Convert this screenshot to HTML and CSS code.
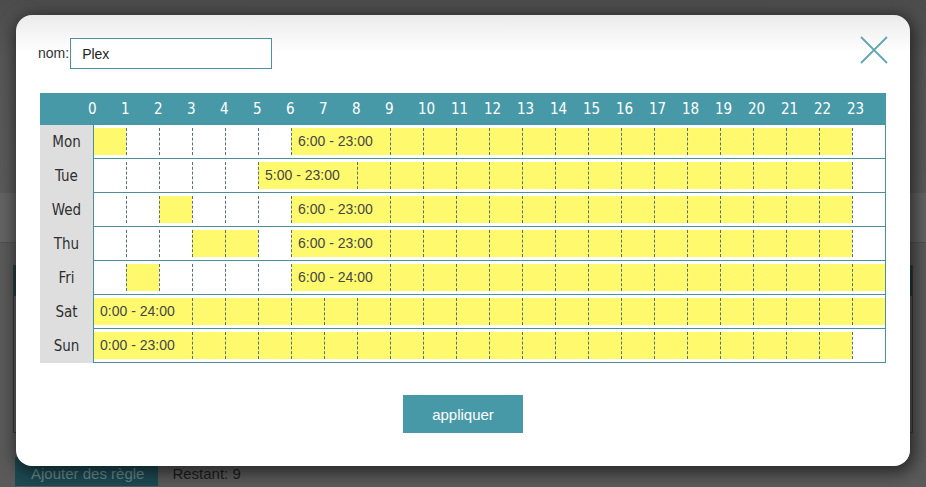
FILE: index.html
```html
<!DOCTYPE html>
<html lang="fr">
<head>
<meta charset="utf-8">
<title>Plex</title>
<link rel="stylesheet" href="styles.css">
</head>
<body>
<div class="page">
  <div class="pg-top"></div>
  <div class="pg-tabs"></div>
  <div class="pg-box"><div class="pg-box-head"></div></div>
  <div class="pg-foot">
    <div class="pg-btn">Ajouter des règle</div>
    <div class="pg-rest">Restant: 9</div>
  </div>
</div>

<div class="modal">
  <div class="top">
    <label class="nom" for="nom">nom:</label>
    <input class="field" id="nom" type="text" value="Plex">
    <div class="close">
      <svg width="28" height="28" viewBox="0 0 28 28"><path d="M1 1 L27 27 M27 1 L1 27" stroke="#5fa7b2" stroke-width="1.8" fill="none"/></svg>
    </div>
  </div>

  <div class="sched">
    <div class="hd">
      <div></div>
      <span>0</span><span>1</span><span>2</span><span>3</span><span>4</span><span>5</span><span>6</span><span>7</span><span>8</span><span>9</span><span>10</span><span>11</span><span>12</span><span>13</span><span>14</span><span>15</span><span>16</span><span>17</span><span>18</span><span>19</span><span>20</span><span>21</span><span>22</span><span>23</span>
    </div>

    <div class="row">
      <div class="day">Mon</div>
      <div class="track">
        <div class="c on"></div>
        <div class="c"></div><div class="c"></div><div class="c"></div><div class="c"></div><div class="c"></div>
        <div class="c on lbl">6:00 - 23:00</div>
        <div class="c on"></div><div class="c on"></div><div class="c on"></div><div class="c on"></div><div class="c on"></div><div class="c on"></div><div class="c on"></div><div class="c on"></div><div class="c on"></div><div class="c on"></div><div class="c on"></div><div class="c on"></div><div class="c on"></div><div class="c on"></div>
        <div class="c"></div>
      </div>
    </div>

    <div class="row">
      <div class="day">Tue</div>
      <div class="track">
        <div class="c"></div><div class="c"></div><div class="c"></div><div class="c"></div><div class="c"></div>
        <div class="c on lbl">5:00 - 23:00</div>
        <div class="c on"></div><div class="c on"></div><div class="c on"></div><div class="c on"></div><div class="c on"></div><div class="c on"></div><div class="c on"></div><div class="c on"></div><div class="c on"></div><div class="c on"></div><div class="c on"></div><div class="c on"></div><div class="c on"></div><div class="c on"></div><div class="c on"></div>
        <div class="c"></div>
      </div>
    </div>

    <div class="row">
      <div class="day">Wed</div>
      <div class="track">
        <div class="c"></div><div class="c"></div>
        <div class="c on"></div>
        <div class="c"></div><div class="c"></div><div class="c"></div>
        <div class="c on lbl">6:00 - 23:00</div>
        <div class="c on"></div><div class="c on"></div><div class="c on"></div><div class="c on"></div><div class="c on"></div><div class="c on"></div><div class="c on"></div><div class="c on"></div><div class="c on"></div><div class="c on"></div><div class="c on"></div><div class="c on"></div><div class="c on"></div><div class="c on"></div>
        <div class="c"></div>
      </div>
    </div>

    <div class="row">
      <div class="day">Thu</div>
      <div class="track">
        <div class="c"></div><div class="c"></div><div class="c"></div>
        <div class="c on"></div><div class="c on"></div>
        <div class="c"></div>
        <div class="c on lbl">6:00 - 23:00</div>
        <div class="c on"></div><div class="c on"></div><div class="c on"></div><div class="c on"></div><div class="c on"></div><div class="c on"></div><div class="c on"></div><div class="c on"></div><div class="c on"></div><div class="c on"></div><div class="c on"></div><div class="c on"></div><div class="c on"></div><div class="c on"></div>
        <div class="c"></div>
      </div>
    </div>

    <div class="row">
      <div class="day">Fri</div>
      <div class="track">
        <div class="c"></div>
        <div class="c on"></div>
        <div class="c"></div><div class="c"></div><div class="c"></div><div class="c"></div>
        <div class="c on lbl">6:00 - 24:00</div>
        <div class="c on"></div><div class="c on"></div><div class="c on"></div><div class="c on"></div><div class="c on"></div><div class="c on"></div><div class="c on"></div><div class="c on"></div><div class="c on"></div><div class="c on"></div><div class="c on"></div><div class="c on"></div><div class="c on"></div><div class="c on"></div><div class="c on"></div>
      </div>
    </div>

    <div class="row">
      <div class="day">Sat</div>
      <div class="track">
        <div class="c on lbl">0:00 - 24:00</div>
        <div class="c on"></div><div class="c on"></div><div class="c on"></div><div class="c on"></div><div class="c on"></div><div class="c on"></div><div class="c on"></div><div class="c on"></div><div class="c on"></div><div class="c on"></div><div class="c on"></div><div class="c on"></div><div class="c on"></div><div class="c on"></div><div class="c on"></div><div class="c on"></div><div class="c on"></div><div class="c on"></div><div class="c on"></div><div class="c on"></div><div class="c on"></div>
      </div>
    </div>

    <div class="row">
      <div class="day">Sun</div>
      <div class="track">
        <div class="c on lbl">0:00 - 23:00</div>
        <div class="c on"></div><div class="c on"></div><div class="c on"></div><div class="c on"></div><div class="c on"></div><div class="c on"></div><div class="c on"></div><div class="c on"></div><div class="c on"></div><div class="c on"></div><div class="c on"></div><div class="c on"></div><div class="c on"></div><div class="c on"></div><div class="c on"></div><div class="c on"></div><div class="c on"></div><div class="c on"></div><div class="c on"></div><div class="c on"></div>
        <div class="c"></div>
      </div>
    </div>
  </div>

  <div class="actions">
    <button class="apply" type="button">appliquer</button>
  </div>
</div>
</body>
</html>
```

FILE: styles.css
```css
html, body {
  margin: 0;
  padding: 0;
}

body {
  width: 926px;
  height: 487px;
  overflow: hidden;
  position: relative;
  background: #595959;
  font-family: "Liberation Sans", Arial, sans-serif;
}

/* dimmed page under the dialog */
.page {
  display: flex;
  flex-direction: column;
  height: 487px;
  overflow: hidden;
  background: linear-gradient(to bottom, #4c4c4c 0, #575757 60px, #5a5a5a 190px);
}

.pg-top {
  height: 193px;
  flex: none;
}

.pg-tabs {
  flex: none;
  height: 49px;
  background: #636363;
  border-bottom: 1px solid #505050;
}

.pg-box {
  flex: none;
  margin: 22px 13px 0;
  height: 166px;
  border: 1px solid #3a3a3a;
  background: #5b5b5b;
}

.pg-box-head {
  height: 30px;
  background: #1f3e44;
}

.pg-foot {
  flex: none;
  display: flex;
  align-items: flex-start;
  margin-top: 24px;
  padding-left: 15px;
  height: 29px;
}

.pg-btn {
  height: 29px;
  box-sizing: border-box;
  padding: 5px 14px 0 16px;
  line-height: 24px;
  background: #1d4a52;
  color: #6a8b91;
  font-size: 15px;
  white-space: nowrap;
}

.pg-rest {
  margin-left: 14px;
  padding-top: 5px;
  font-size: 15px;
  color: #1c1c1c;
  line-height: 24px;
  white-space: nowrap;
}

/* dialog */
.modal {
  position: absolute;
  left: 16px;
  top: 15px;
  width: 894px;
  height: 451px;
  box-sizing: border-box;
  padding: 23px 22px 0 22px;
  border-radius: 16px;
  background: linear-gradient(to bottom, #ebebeb 0, #ffffff 38px);
  box-shadow: 2px 4px 16px 3px rgba(0, 0, 0, 0.55);
}

.top {
  display: flex;
  align-items: flex-start;
  height: 31px;
}

.nom {
  font-size: 14px;
  color: #333;
  line-height: 31px;
  margin-right: 1px;
}

.field {
  box-sizing: border-box;
  width: 202px;
  height: 31px;
  margin: 0;
  padding: 0 0 0 11px;
  border: 1px solid #4b93a0;
  border-radius: 0;
  font-family: "Liberation Sans", Arial, sans-serif;
  font-size: 14px;
  color: #222;
  background: #fff;
  outline: none;
}

.close {
  margin-left: auto;
  margin-top: -2px;
  width: 28px;
  height: 28px;
}

.close svg {
  display: block;
}

/* schedule table */
.sched {
  margin: 24px 0 0 2px;
  width: 846px;
}

.hd {
  display: grid;
  grid-template-columns: 53px repeat(24, 33px) 1px;
  height: 32px;
  align-items: center;
  background: #4899a8;
  font-family: "DejaVu Sans Condensed", "DejaVu Sans", Verdana, sans-serif;
  font-size: 15px;
  color: #fff;
}

.hd span {
  margin-left: -5px;
  line-height: 32px;
}

.row {
  display: grid;
  grid-template-columns: 53px 793px;
}

.day {
  background: #dedede;
  display: flex;
  align-items: center;
  justify-content: center;
  font-family: "DejaVu Sans Condensed", "DejaVu Sans", Verdana, sans-serif;
  font-size: 15px;
  color: #2e2e2e;
}

.track {
  display: grid;
  grid-template-columns: 32px repeat(23, 33px);
  padding: 3px 0 3px;
  border-left: 1px solid #4a8f9b;
  border-right: 1px solid #4a8f9b;
  border-bottom: 1px solid #4a8f9b;
  background: #fff;
}

.c {
  height: 27px;
  border-left: 1px dashed #56707c;
}

.c:first-child {
  border-left: none;
}

.on {
  background: #fff96e;
}

.lbl {
  grid-column: span 3;
  font-size: 14px;
  color: #464646;
  line-height: 27px;
  padding-left: 6px;
  white-space: nowrap;
}

.actions {
  display: flex;
  justify-content: center;
  margin-top: 32px;
}

.apply {
  width: 120px;
  height: 38px;
  border: none;
  border-radius: 0;
  background: #4899a8;
  color: #fff;
  font-family: "Liberation Sans", Arial, sans-serif;
  font-size: 15px;
  padding: 0;
  cursor: pointer;
}
```
